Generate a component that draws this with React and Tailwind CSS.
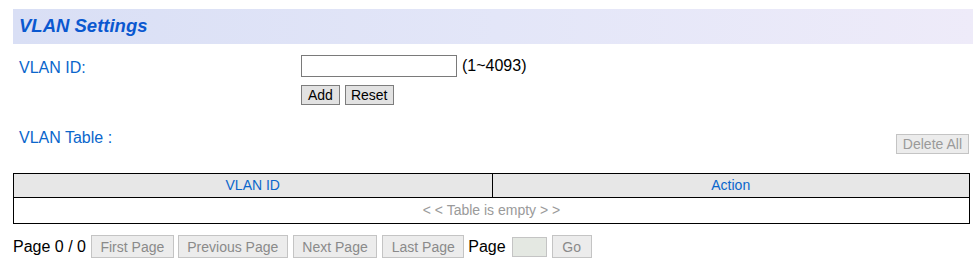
import React, { useState } from 'react'

const font = "font-['Liberation_Sans',Arial,sans-serif]"

const PageButton = ({ children, className = '' }) => (
  <button
    className={`h-[23px] px-[8.5px] border border-[#c4c4c4] bg-[#ececec] text-[14px] leading-none text-[#8a8a8a] ${className}`}
  >
    {children}
  </button>
)

const App = () => {
  const [vlanId, setVlanId] = useState('')
  const [page, setPage] = useState('')

  return (
    <div className={`${font} bg-white w-[979px] h-[274px] pl-[13px] pt-[9px]`}>
      {/* Title band */}
      <div className="w-[960px] h-[35px] flex items-center pl-[6px] bg-gradient-to-r from-[#d9dff5] via-[#e3e6f8] to-[#eeebf9]">
        <h1 className="text-[18.5px] font-bold italic text-[#0a58d0] leading-none">VLAN Settings</h1>
      </div>

      {/* VLAN ID */}
      <div className="flex pl-[6px] mt-[11px]">
        <div className="w-[282px] pt-[4px] text-[16px] leading-[18px] text-[#0a66cc]">VLAN ID:</div>
        <div>
          <div className="flex items-center">
            <input
              value={vlanId}
              onChange={(e) => setVlanId(e.target.value)}
              className="w-[156px] h-[22px] border border-[#7a7a7a] bg-white px-1 text-[14px] outline-none"
            />
            <span className="ml-[5px] text-[16px] leading-none text-black">(1~4093)</span>
          </div>
          <div className="flex gap-[5px] mt-[8px]">
            <button className="h-[20px] px-[6px] border border-[#7d7d7d] bg-[#e2e2e2] text-[14px] leading-none text-black">Add</button>
            <button className="h-[20px] px-[5px] border border-[#7d7d7d] bg-[#e2e2e2] text-[14px] leading-none text-black">Reset</button>
          </div>
        </div>
      </div>

      {/* VLAN Table header */}
      <div className="w-[956px] flex justify-between mt-[24px]">
        <div className="pl-[6px] text-[16px] leading-[18px] text-[#0a66cc]">VLAN Table :</div>
        <button className="mt-[5px] h-[20px] px-[6px] border border-[#c4c4c4] bg-[#ececec] text-[14px] leading-none text-[#9a9a9a]">
          Delete All
        </button>
      </div>

      {/* Table */}
      <div className="w-[957px] mt-[19px] border border-black">
        <div className="grid grid-cols-2 h-[24px] border-b border-black bg-[#e7e7e7] text-[14px] text-[#0a66cc]">
          <div className="flex items-center justify-center">VLAN ID</div>
          <div className="flex items-center justify-center border-l border-black">Action</div>
        </div>
        <div className="h-[25px] flex items-center justify-center text-[14px] text-[#9a9a9a]">
          &lt; &lt; Table is empty &gt; &gt;
        </div>
      </div>

      {/* Pagination */}
      <div className="flex items-center mt-[11px] text-[16px] text-black">
        <span className="leading-none">Page 0 / 0</span>
        <PageButton className="ml-[5px]">First Page</PageButton>
        <PageButton className="ml-[4px]">Previous Page</PageButton>
        <PageButton className="ml-[5px]">Next Page</PageButton>
        <PageButton className="ml-[5px]">Last Page</PageButton>
        <span className="ml-[4px] leading-none">Page</span>
        <input
          value={page}
          onChange={(e) => setPage(e.target.value)}
          className="ml-[6px] w-[35px] h-[20px] border border-[#c4c4c4] bg-[#e4e8e2] text-[14px] outline-none"
        />
        <PageButton className="ml-[5px] w-[40px] px-0">Go</PageButton>
      </div>
    </div>
  )
}

export default App
